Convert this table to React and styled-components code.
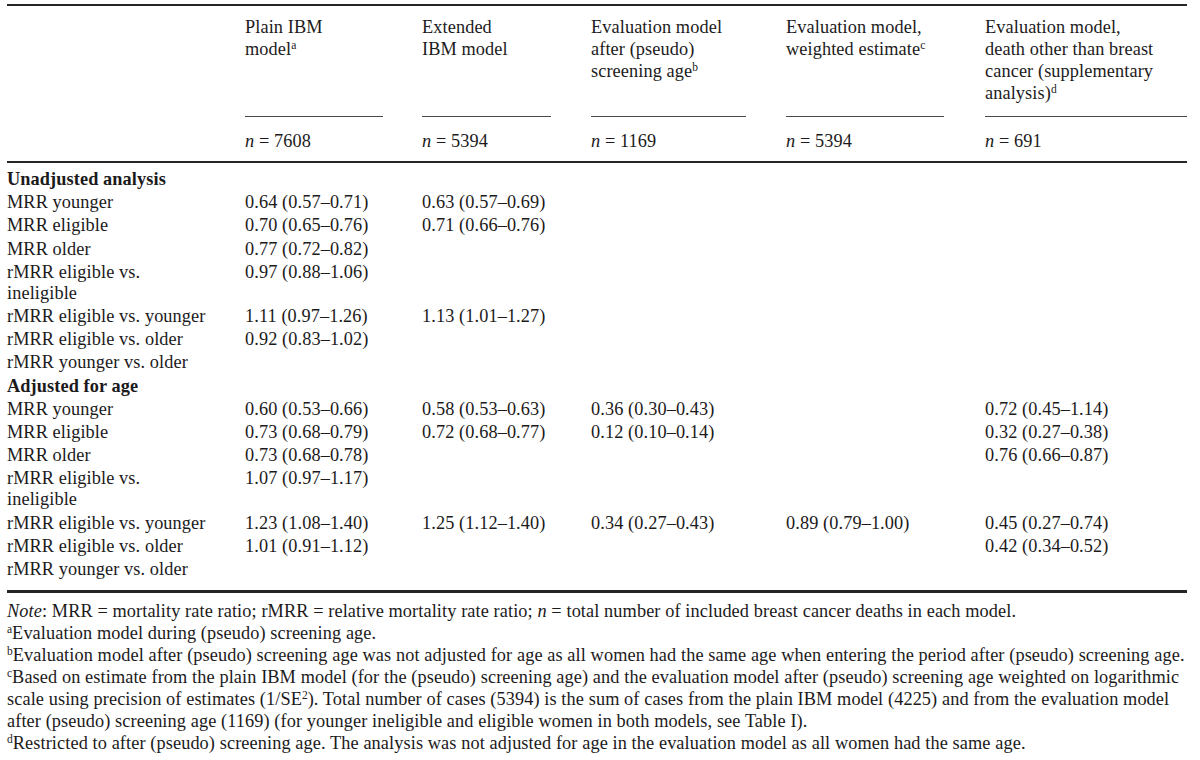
import styled, { createGlobalStyle } from "styled-components";

const GlobalStyle = createGlobalStyle`
  html, body {
    margin: 0;
    background: #fff;
  }
  body {
    font-family: "Liberation Serif", "Times New Roman", serif;
    color: #1c1a1b;
  }
`;

// track widths: label, then the five model columns (gap to next column is kept inside each track)
const COLS = "238px 177px 169px 195px 199px 202px";
const GAPS = [39, 40, 40, 41, 0];

const Page = styled.div`
  width: 1180px;
  padding: 4px 0 0 7px;
  font-size: 18.3px;
  letter-spacing: 0.1px;
`;

const Rule = styled.div`
  height: ${({ $h }) => $h}px;
  background: #262626;
`;

const HeadGrid = styled.div`
  display: grid;
  grid-template-columns: ${COLS};
`;

const HeadTitle = styled.div`
  margin-right: ${({ $gap }) => $gap}px;
  padding: 10px 0 12px;
  line-height: 22px;
  border-bottom: ${({ $blank }) => ($blank ? "none" : "1px solid #4a4a4a")};
`;

const HeadN = styled.div`
  padding: 13px 0 9px;
  line-height: 22px;
`;

const Body = styled.div`
  display: grid;
  grid-template-columns: ${COLS};
  padding: 5.5px 0 9px;
`;

const Cell = styled.div`
  padding: 0.8px 0;
  line-height: 21.5px;
  white-space: nowrap;
`;

const Section = styled(Cell)`
  grid-column: 1 / -1;
  font-weight: bold;
`;

const Sup = styled.sup`
  font-size: 11.5px;
  line-height: 0;
  vertical-align: 6px;
  letter-spacing: 0;
`;

const Notes = styled.div`
  margin-top: 7px;
  line-height: 22px;
`;

const NoteLine = styled.div`
  white-space: nowrap;
`;

const headers = [
  <>Plain IBM<br />model<Sup>a</Sup></>,
  <>Extended<br />IBM model</>,
  <>Evaluation model<br />after (pseudo)<br />screening age<Sup>b</Sup></>,
  <>Evaluation model,<br />weighted estimate<Sup>c</Sup></>,
  <>Evaluation model,<br />death other than breast<br />cancer (supplementary<br />analysis)<Sup>d</Sup></>,
];

const counts = ["7608", "5394", "1169", "5394", "691"];

const twoLine = (
  <>
    rMRR eligible vs.
    <br />
    ineligible
  </>
);

const sections = [
  {
    title: "Unadjusted analysis",
    rows: [
      ["MRR younger", "0.64 (0.57–0.71)", "0.63 (0.57–0.69)"],
      ["MRR eligible", "0.70 (0.65–0.76)", "0.71 (0.66–0.76)"],
      ["MRR older", "0.77 (0.72–0.82)"],
      [twoLine, "0.97 (0.88–1.06)"],
      ["rMRR eligible vs. younger", "1.11 (0.97–1.26)", "1.13 (1.01–1.27)"],
      ["rMRR eligible vs. older", "0.92 (0.83–1.02)"],
      ["rMRR younger vs. older"],
    ],
  },
  {
    title: "Adjusted for age",
    rows: [
      ["MRR younger", "0.60 (0.53–0.66)", "0.58 (0.53–0.63)", "0.36 (0.30–0.43)", "", "0.72 (0.45–1.14)"],
      ["MRR eligible", "0.73 (0.68–0.79)", "0.72 (0.68–0.77)", "0.12 (0.10–0.14)", "", "0.32 (0.27–0.38)"],
      ["MRR older", "0.73 (0.68–0.78)", "", "", "", "0.76 (0.66–0.87)"],
      [twoLine, "1.07 (0.97–1.17)"],
      ["rMRR eligible vs. younger", "1.23 (1.08–1.40)", "1.25 (1.12–1.40)", "0.34 (0.27–0.43)", "0.89 (0.79–1.00)", "0.45 (0.27–0.74)"],
      ["rMRR eligible vs. older", "1.01 (0.91–1.12)", "", "", "", "0.42 (0.34–0.52)"],
      ["rMRR younger vs. older"],
    ],
  },
];

function App() {
  return (
    <Page>
      <GlobalStyle />
      <Rule $h={2} />
      <HeadGrid>
        <HeadTitle $gap={0} $blank />
        {headers.map((h, i) => (
          <HeadTitle key={i} $gap={GAPS[i]}>
            {h}
          </HeadTitle>
        ))}
        <HeadN />
        {counts.map((c, i) => (
          <HeadN key={i}>
            <i>n</i> = {c}
          </HeadN>
        ))}
      </HeadGrid>
      <Rule $h={2} />
      <Body>
        {sections.map((s) => [
          <Section key={s.title}>{s.title}</Section>,
          ...s.rows.flatMap((r, ri) =>
            [0, 1, 2, 3, 4, 5].map((ci) => (
              <Cell key={s.title + ri + "-" + ci}>{r[ci] || ""}</Cell>
            ))
          ),
        ])}
      </Body>
      <Rule $h={3} />
      <Notes>
        <NoteLine>
          <i>Note</i>: MRR = mortality rate ratio; rMRR = relative mortality rate ratio; <i>n</i> = total number of
          included breast cancer deaths in each model.
        </NoteLine>
        <NoteLine>
          <Sup>a</Sup>Evaluation model during (pseudo) screening age.
        </NoteLine>
        <NoteLine>
          <Sup>b</Sup>Evaluation model after (pseudo) screening age was not adjusted for age as all women had the same
          age when entering the period after (pseudo) screening age.
        </NoteLine>
        <NoteLine>
          <Sup>c</Sup>Based on estimate from the plain IBM model (for the (pseudo) screening age) and the evaluation
          model after (pseudo) screening age weighted on logarithmic
        </NoteLine>
        <NoteLine>
          scale using precision of estimates (1/SE<Sup>2</Sup>). Total number of cases (5394) is the sum of cases from
          the plain IBM model (4225) and from the evaluation model
        </NoteLine>
        <NoteLine>
          after (pseudo) screening age (1169) (for younger ineligible and eligible women in both models, see Table I).
        </NoteLine>
        <NoteLine>
          <Sup>d</Sup>Restricted to after (pseudo) screening age. The analysis was not adjusted for age in the
          evaluation model as all women had the same age.
        </NoteLine>
      </Notes>
    </Page>
  );
}

export default App;
